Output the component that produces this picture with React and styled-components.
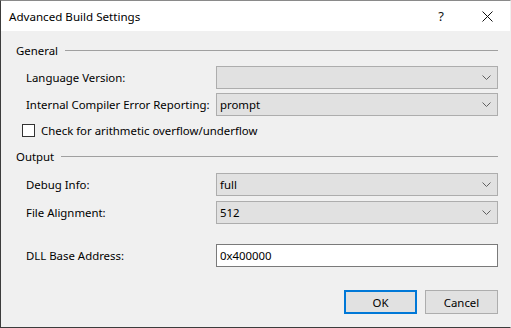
import React from 'react';
import styled, {createGlobalStyle} from 'styled-components';

const Global = createGlobalStyle`
  html, body {
    margin: 0;
    padding: 0;
    background: #f0f0f0;
  }
  body {
    font-family: "Noto Sans", "Liberation Sans", sans-serif;
    font-size: 11.4px;
    color: #000;
  }
`;

function Chevron() {
  return (
    <svg width="9" height="5" viewBox="0 0 9 5">
      <path d="M0.5 0.5 L4.5 4.5 L8.5 0.5" fill="none" stroke="#606060" strokeWidth="1" />
    </svg>
  );
}

function App() {
  return (
    <Window>
      <Global />
      <TitleBar>
        <Title>Advanced Build Settings</Title>
        <TitleButton>?</TitleButton>
        <TitleButton>
          <svg width="11" height="11" viewBox="0 0 11 11">
            <path d="M0.5 0.5 L10.5 10.5 M10.5 0.5 L0.5 10.5" stroke="#111" strokeWidth="1" />
          </svg>
        </TitleButton>
      </TitleBar>

      <Body>
        <GroupHeader top={11}>
          <span>General</span>
          <Rule />
        </GroupHeader>

        <Row top={8}>
          <Label>Language Version:</Label>
          <SelectBox>
            <span></span>
            <Chevron />
          </SelectBox>
        </Row>
        <Row top={4}>
          <Label>Internal Compiler Error Reporting:</Label>
          <SelectBox>
            <span>prompt</span>
            <Chevron />
          </SelectBox>
        </Row>

        <CheckRow>
          <CheckBox />
          <span>Check for arithmetic overflow/underflow</span>
        </CheckRow>

        <GroupHeader top={11}>
          <span>Output</span>
          <Rule />
        </GroupHeader>

        <Row top={9}>
          <Label>Debug Info:</Label>
          <SelectBox>
            <span>full</span>
            <Chevron />
          </SelectBox>
        </Row>
        <Row top={5}>
          <Label>File Alignment:</Label>
          <SelectBox>
            <span>512</span>
            <Chevron />
          </SelectBox>
        </Row>

        <Row top={20}>
          <Label>DLL Base Address:</Label>
          <TextBox>0x400000</TextBox>
        </Row>

        <Buttons>
          <Button primary>OK</Button>
          <Button>Cancel</Button>
        </Buttons>
      </Body>
    </Window>
  );
}

const Window = styled.div`
  width: 511px;
  height: 328px;
  box-sizing: border-box;
  border: 1px solid #3c3c3c;
  border-top-color: #8a8a8a;
  border-right-color: #f0f0f0;
  display: flex;
  flex-direction: column;
  background: #f0f0f0;
  overflow: hidden;
`;

const TitleBar = styled.div`
  height: 30px;
  background: #fff;
  display: flex;
  align-items: center;
  padding-left: 8px;
  flex-shrink: 0;
`;

const Title = styled.div`
  flex: 1;
  font-size: 11.6px;
  color: #000;
`;

const TitleButton = styled.div`
  width: 46px;
  height: 30px;
  display: flex;
  align-items: center;
  justify-content: center;
  font-size: 13px;
  color: #111;
`;

const Body = styled.div`
  flex: 1;
  padding: 0 12px 0 15px;
  display: flex;
  flex-direction: column;
`;

const GroupHeader = styled.div`
  margin-top: ${p => p.top}px;
  height: 16px;
  display: flex;
  align-items: center;
  gap: 7px;
`;

const Rule = styled.div`
  flex: 1;
  height: 1px;
  background: #a0a0a0;
`;

const Row = styled.div`
  margin-top: ${p => p.top}px;
  display: flex;
  align-items: center;
  padding-left: 10px;
`;

const Label = styled.div`
  width: 190px;
  flex-shrink: 0;
  white-space: nowrap;
`;

const SelectBox = styled.div`
  flex: 1;
  height: 23px;
  box-sizing: border-box;
  border: 1px solid #adadad;
  background: #e1e1e1;
  display: flex;
  align-items: center;
  justify-content: space-between;
  padding: 0 6px 0 3px;
`;

const TextBox = styled.div`
  flex: 1;
  height: 23px;
  box-sizing: border-box;
  border: 1px solid #7a7a7a;
  background: #fff;
  display: flex;
  align-items: center;
  padding: 0 3px;
`;

const CheckRow = styled.div`
  margin-top: 7px;
  padding-left: 6px;
  display: flex;
  align-items: center;
  gap: 6px;
  height: 14px;
`;

const CheckBox = styled.div`
  width: 13px;
  height: 13px;
  box-sizing: border-box;
  border: 1px solid #333;
  background: #fff;
`;

const Buttons = styled.div`
  margin-top: auto;
  margin-bottom: 13px;
  display: flex;
  justify-content: flex-end;
  gap: 8px;
`;

const Button = styled.div`
  width: 73px;
  height: 24px;
  box-sizing: border-box;
  border: ${p => (p.primary ? '2px solid #0078d7' : '1px solid #adadad')};
  background: #e1e1e1;
  display: flex;
  align-items: center;
  justify-content: center;
`;

export default App;
